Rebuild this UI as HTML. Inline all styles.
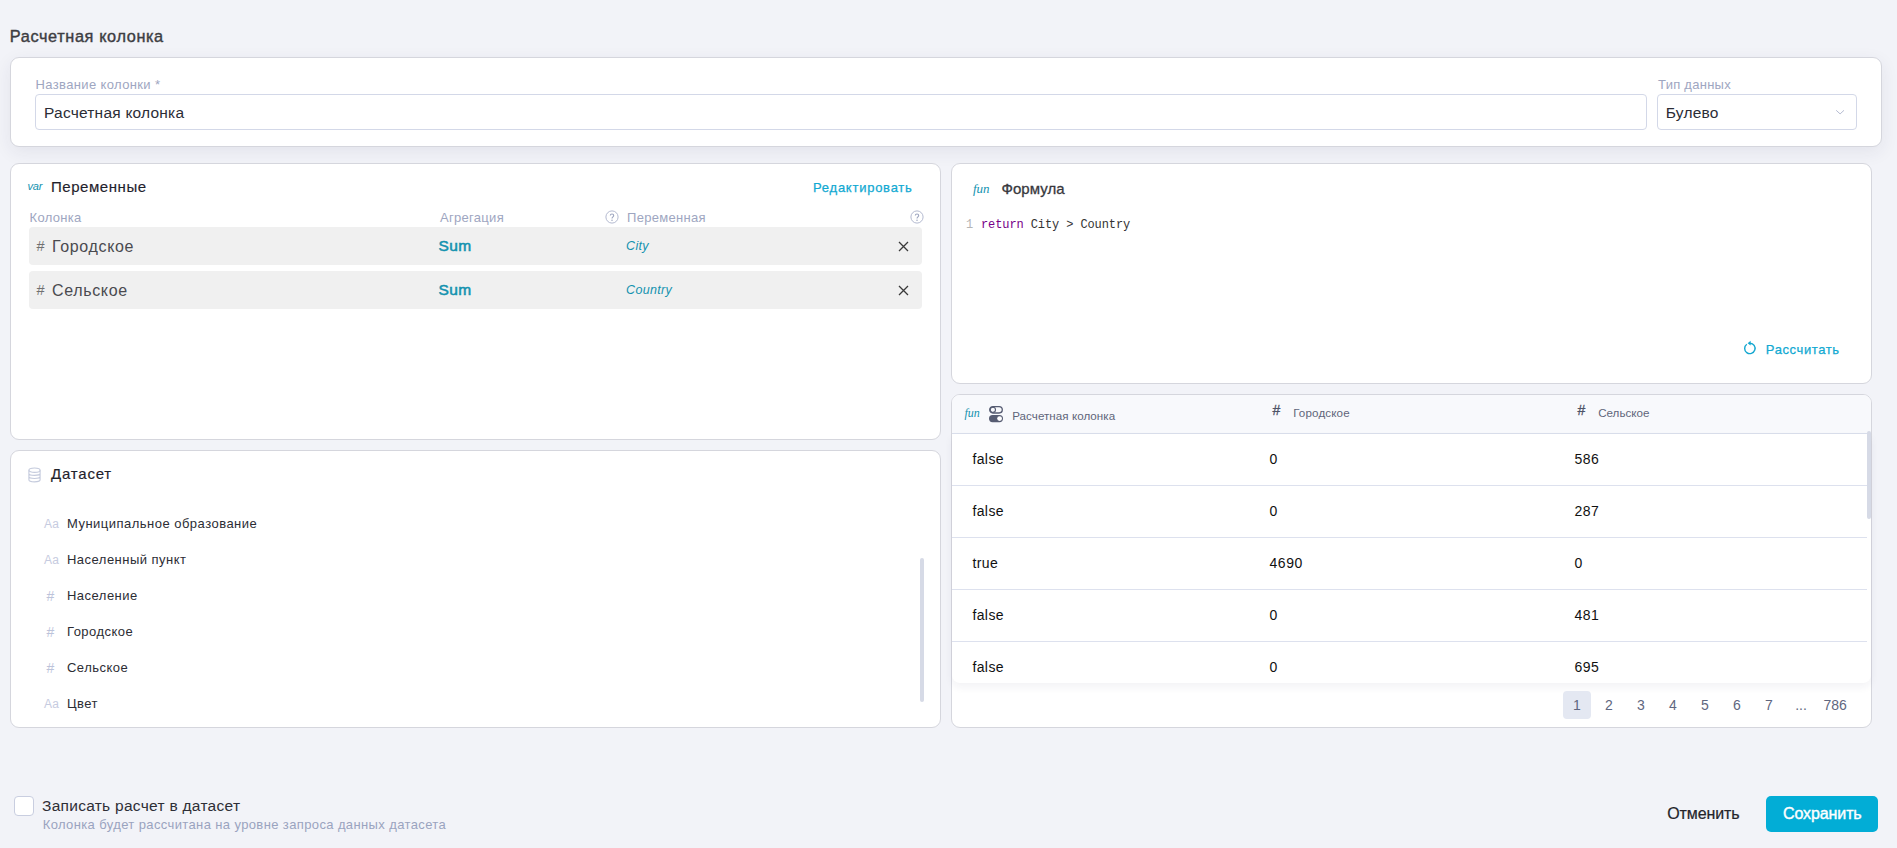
<!DOCTYPE html>
<html><head><meta charset="utf-8"><style>
html,body{margin:0;padding:0;}
body{width:1897px;height:848px;overflow:hidden;position:relative;background:#f2f3f8;font-family:'Liberation Sans', sans-serif;}
.a{position:absolute;}
.t{position:absolute;white-space:nowrap;line-height:1;}
</style></head><body>
<div class="t" id="title" style="left:9.8px;top:28.00px;font-size:16.3px;color:#3d3d42;font-weight:400;letter-spacing:0.62px;font-family:'Liberation Sans', sans-serif;-webkit-text-stroke:0.4px currentColor;">Расчетная колонка</div>
<div class="a" style="left:10px;top:57px;width:1872px;height:90px;background:#fff;border:1px solid #d5d6dd;border-radius:9px;box-sizing:border-box;box-shadow:0 5px 18px rgba(40,45,80,0.075);"></div>
<div class="t" id="lbl1" style="left:35.5px;top:78.00px;font-size:13px;color:#9ea6c1;font-weight:400;letter-spacing:0.37px;font-family:'Liberation Sans', sans-serif;">Название колонки *</div>
<div class="a" style="left:35px;top:94px;width:1612px;height:36px;background:#fff;border:1px solid #d3d8e8;border-radius:4px;box-sizing:border-box;"></div>
<div class="t" id="inp1" style="left:44px;top:105.08px;font-size:15.5px;color:#2b2d36;font-weight:400;letter-spacing:0.22px;font-family:'Liberation Sans', sans-serif;">Расчетная колонка</div>
<div class="t" id="lbl2" style="left:1658px;top:78.00px;font-size:13px;color:#9ea6c1;font-weight:400;letter-spacing:0.27px;font-family:'Liberation Sans', sans-serif;">Тип данных</div>
<div class="a" style="left:1657px;top:94px;width:200px;height:36px;background:#fff;border:1px solid #d3d8e8;border-radius:4px;box-sizing:border-box;"></div>
<div class="t" id="sel" style="left:1665.8px;top:104.68px;font-size:15.5px;color:#2b2d36;font-weight:400;letter-spacing:0.2px;font-family:'Liberation Sans', sans-serif;">Булево</div>
<svg class="a" style="left:1835px;top:108px" width="12" height="8" viewBox="0 0 12 8"><path d="M1.2 2.3 L5.1 5.9 L9 2.3" fill="none" stroke="#b6bcd2" stroke-width="1"/></svg>
<div class="a" style="left:10px;top:163px;width:931px;height:277px;background:#fff;border:1px solid #d5d6dd;border-radius:9px;box-sizing:border-box;"></div>
<div class="t" id="var" style="left:27.5px;top:180.69px;font-size:11px;color:#1392af;font-weight:400;letter-spacing:-0.2px;font-family:'Liberation Sans', sans-serif;font-style:italic;">var</div>
<div class="t" id="perem" style="left:51px;top:178.90px;font-size:15px;color:#1f222c;font-weight:400;letter-spacing:0.55px;font-family:'Liberation Sans', sans-serif;-webkit-text-stroke:0.15px currentColor;">Переменные</div>
<div class="t" id="edit" style="left:813px;top:180.60px;font-size:13px;color:#11a9d2;font-weight:400;letter-spacing:0.75px;font-family:'Liberation Sans', sans-serif;-webkit-text-stroke:0.25px currentColor;">Редактировать</div>
<div class="t" style="left:29.6px;top:211.00px;font-size:13px;color:#9ea6c1;font-weight:400;letter-spacing:0.3px;font-family:'Liberation Sans', sans-serif;">Колонка</div>
<div class="t" style="left:440px;top:211.00px;font-size:13px;color:#9ea6c1;font-weight:400;letter-spacing:0.3px;font-family:'Liberation Sans', sans-serif;">Агрегация</div>
<div class="t" style="left:627px;top:211.00px;font-size:13px;color:#9ea6c1;font-weight:400;letter-spacing:0.3px;font-family:'Liberation Sans', sans-serif;">Переменная</div>
<svg class="a" style="left:605.3px;top:210.4px" width="14" height="14" viewBox="0 0 14 14"><circle cx="7" cy="7" r="6.1" fill="none" stroke="#b4bad0" stroke-width="1"/><path d="M5.3 5.5 C5.3 3.4 8.7 3.4 8.7 5.5 C8.7 6.9 7 6.9 7 8.6" fill="none" stroke="#9ea6c0" stroke-width="1.1"/><circle cx="7" cy="10.3" r="0.75" fill="#9ea6c0"/></svg>
<svg class="a" style="left:910.2px;top:210.4px" width="14" height="14" viewBox="0 0 14 14"><circle cx="7" cy="7" r="6.1" fill="none" stroke="#b4bad0" stroke-width="1"/><path d="M5.3 5.5 C5.3 3.4 8.7 3.4 8.7 5.5 C8.7 6.9 7 6.9 7 8.6" fill="none" stroke="#9ea6c0" stroke-width="1.1"/><circle cx="7" cy="10.3" r="0.75" fill="#9ea6c0"/></svg>
<div class="a" style="left:29px;top:227px;width:893px;height:38px;background:#f0f0f0;border-radius:4px;"></div>
<div class="t" style="left:36.5px;top:239.03px;font-size:14.5px;color:#707070;font-weight:400;letter-spacing:0px;font-family:'Liberation Sans', sans-serif;">#</div>
<div class="t" id="rn0" style="left:52px;top:239.46px;font-size:16px;color:#4a4a4f;font-weight:400;letter-spacing:0.65px;font-family:'Liberation Sans', sans-serif;">Городское</div>
<div class="t" id="sum0" style="left:438.5px;top:238.48px;font-size:15.5px;color:#1392af;font-weight:400;letter-spacing:0.35px;font-family:'Liberation Sans', sans-serif;-webkit-text-stroke:0.55px currentColor;">Sum</div>
<div class="t" id="var0" style="left:626px;top:239.62px;font-size:12.5px;color:#1392af;font-weight:400;letter-spacing:0.35px;font-family:'Liberation Sans', sans-serif;font-style:italic;">City</div>
<svg class="a" style="left:898px;top:240.5px" width="11" height="11" viewBox="0 0 11 11"><path d="M1 1 L10 10 M10 1 L1 10" stroke="#3a3a3a" stroke-width="1.3"/></svg>
<div class="a" style="left:29px;top:271px;width:893px;height:38px;background:#f0f0f0;border-radius:4px;"></div>
<div class="t" style="left:36.5px;top:283.03px;font-size:14.5px;color:#707070;font-weight:400;letter-spacing:0px;font-family:'Liberation Sans', sans-serif;">#</div>
<div class="t" id="rn1" style="left:52px;top:283.46px;font-size:16px;color:#4a4a4f;font-weight:400;letter-spacing:0.65px;font-family:'Liberation Sans', sans-serif;">Сельское</div>
<div class="t" id="sum1" style="left:438.5px;top:282.48px;font-size:15.5px;color:#1392af;font-weight:400;letter-spacing:0.35px;font-family:'Liberation Sans', sans-serif;-webkit-text-stroke:0.55px currentColor;">Sum</div>
<div class="t" id="var1" style="left:626px;top:283.62px;font-size:12.5px;color:#1392af;font-weight:400;letter-spacing:0.35px;font-family:'Liberation Sans', sans-serif;font-style:italic;">Country</div>
<svg class="a" style="left:898px;top:284.5px" width="11" height="11" viewBox="0 0 11 11"><path d="M1 1 L10 10 M10 1 L1 10" stroke="#3a3a3a" stroke-width="1.3"/></svg>
<div class="a" style="left:951px;top:163px;width:921px;height:221px;background:#fff;border:1px solid #d5d6dd;border-radius:9px;box-sizing:border-box;"></div>
<div class="t" id="fun1" style="left:973px;top:182.40px;font-size:13px;color:#1392af;font-weight:400;letter-spacing:0px;font-family:'Liberation Serif', serif;font-style:italic;">fun</div>
<div class="t" id="formula" style="left:1001.5px;top:181.20px;font-size:15px;color:#38383d;font-weight:400;letter-spacing:0.05px;font-family:'Liberation Sans', sans-serif;-webkit-text-stroke:0.3px currentColor;">Формула</div>
<div class="t" style="left:966px;top:218.84px;font-size:12px;color:#b5b5b5;font-weight:400;letter-spacing:0px;font-family:'Liberation Mono', monospace;">1</div>
<div class="t" id="code" style="left:981px;top:218.84px;font-size:12px;color:#333;font-weight:400;letter-spacing:-0.1px;font-family:'Liberation Mono', monospace;"><span style="color:#770088">return</span> City &gt; Country</div>
<svg class="a" style="left:1742px;top:340px" width="16" height="16" viewBox="0 0 16 16"><path d="M4.8 4.2 A5.2 5.2 0 1 0 8 3.2" fill="none" stroke="#14a7d0" stroke-width="1.4"/><path d="M8.6 0.8 L8.6 5.4 L5.6 3.2 Z" fill="#14a7d0"/></svg>
<div class="t" id="calc" style="left:1765.8px;top:343.20px;font-size:13px;color:#11a9d2;font-weight:400;letter-spacing:0.6px;font-family:'Liberation Sans', sans-serif;-webkit-text-stroke:0.25px currentColor;">Рассчитать</div>
<div class="a" style="left:951px;top:394px;width:921px;height:334px;background:#fff;border:1px solid #d5d6dd;border-radius:9px;box-sizing:border-box;overflow:hidden;"></div>
<div class="a" style="left:952px;top:395px;width:919px;height:38px;background:#f8f9fc;border-radius:8px 8px 0 0;"></div>
<div class="a" style="left:952px;top:433px;width:915px;height:1px;background:#dadfec;"></div>
<div class="t" id="fun2" style="left:964.5px;top:406.84px;font-size:12px;color:#1392af;font-weight:400;letter-spacing:0px;font-family:'Liberation Serif', serif;font-style:italic;">fun</div>
<svg class="a" style="left:988px;top:405px" width="16" height="18" viewBox="0 0 16 18"><rect x="1.7" y="1.6" width="12.6" height="6.4" rx="3.2" fill="none" stroke="#565c72" stroke-width="1.3"/><circle cx="4.9" cy="4.8" r="2.6" fill="none" stroke="#565c72" stroke-width="1.1"/><rect x="1" y="10" width="14" height="7.2" rx="3.6" fill="#565c72"/><circle cx="11.6" cy="13.6" r="2.4" fill="#fff"/></svg>
<div class="t" id="th1" style="left:1012.2px;top:409.78px;font-size:11.6px;color:#60657a;font-weight:400;letter-spacing:0.05px;font-family:'Liberation Sans', sans-serif;">Расчетная колонка</div>
<div class="t" style="left:1272.6px;top:402.75px;font-size:14px;color:#4f5468;font-weight:400;letter-spacing:0px;font-family:'Liberation Sans', sans-serif;-webkit-text-stroke:0.3px currentColor;">#</div>
<div class="t" id="th2" style="left:1293.2px;top:406.58px;font-size:11.6px;color:#60657a;font-weight:400;letter-spacing:0.15px;font-family:'Liberation Sans', sans-serif;">Городское</div>
<div class="t" style="left:1577.6px;top:402.75px;font-size:14px;color:#4f5468;font-weight:400;letter-spacing:0px;font-family:'Liberation Sans', sans-serif;-webkit-text-stroke:0.3px currentColor;">#</div>
<div class="t" id="th3" style="left:1598.2px;top:406.78px;font-size:11.6px;color:#60657a;font-weight:400;letter-spacing:0.0px;font-family:'Liberation Sans', sans-serif;">Сельское</div>
<div class="a" style="left:952px;top:434px;width:919px;height:249px;background:#fff;border-radius:0 0 8px 8px;box-shadow:0 4px 8px rgba(30,40,80,0.06);"></div>
<div class="t" style="left:972.4px;top:452.15px;font-size:14px;color:#111;font-weight:400;letter-spacing:0.4px;font-family:'Liberation Sans', sans-serif;">false</div>
<div class="t" style="left:1269.5px;top:452.15px;font-size:14px;color:#111;font-weight:400;letter-spacing:0.55px;font-family:'Liberation Sans', sans-serif;">0</div>
<div class="t" style="left:1574.4px;top:452.15px;font-size:14px;color:#111;font-weight:400;letter-spacing:0.55px;font-family:'Liberation Sans', sans-serif;">586</div>
<div class="a" style="left:952px;top:485px;width:915px;height:1px;background:#dde1ee;"></div>
<div class="t" style="left:972.4px;top:504.15px;font-size:14px;color:#111;font-weight:400;letter-spacing:0.4px;font-family:'Liberation Sans', sans-serif;">false</div>
<div class="t" style="left:1269.5px;top:504.15px;font-size:14px;color:#111;font-weight:400;letter-spacing:0.55px;font-family:'Liberation Sans', sans-serif;">0</div>
<div class="t" style="left:1574.4px;top:504.15px;font-size:14px;color:#111;font-weight:400;letter-spacing:0.55px;font-family:'Liberation Sans', sans-serif;">287</div>
<div class="a" style="left:952px;top:537px;width:915px;height:1px;background:#dde1ee;"></div>
<div class="t" style="left:972.4px;top:556.15px;font-size:14px;color:#111;font-weight:400;letter-spacing:0.4px;font-family:'Liberation Sans', sans-serif;">true</div>
<div class="t" style="left:1269.5px;top:556.15px;font-size:14px;color:#111;font-weight:400;letter-spacing:0.55px;font-family:'Liberation Sans', sans-serif;">4690</div>
<div class="t" style="left:1574.4px;top:556.15px;font-size:14px;color:#111;font-weight:400;letter-spacing:0.55px;font-family:'Liberation Sans', sans-serif;">0</div>
<div class="a" style="left:952px;top:589px;width:915px;height:1px;background:#dde1ee;"></div>
<div class="t" style="left:972.4px;top:608.15px;font-size:14px;color:#111;font-weight:400;letter-spacing:0.4px;font-family:'Liberation Sans', sans-serif;">false</div>
<div class="t" style="left:1269.5px;top:608.15px;font-size:14px;color:#111;font-weight:400;letter-spacing:0.55px;font-family:'Liberation Sans', sans-serif;">0</div>
<div class="t" style="left:1574.4px;top:608.15px;font-size:14px;color:#111;font-weight:400;letter-spacing:0.55px;font-family:'Liberation Sans', sans-serif;">481</div>
<div class="a" style="left:952px;top:641px;width:915px;height:1px;background:#dde1ee;"></div>
<div class="t" style="left:972.4px;top:660.15px;font-size:14px;color:#111;font-weight:400;letter-spacing:0.4px;font-family:'Liberation Sans', sans-serif;">false</div>
<div class="t" style="left:1269.5px;top:660.15px;font-size:14px;color:#111;font-weight:400;letter-spacing:0.55px;font-family:'Liberation Sans', sans-serif;">0</div>
<div class="t" style="left:1574.4px;top:660.15px;font-size:14px;color:#111;font-weight:400;letter-spacing:0.55px;font-family:'Liberation Sans', sans-serif;">695</div>
<div class="a" style="left:1867px;top:431px;width:4px;height:88px;background:#d6dae6;border-radius:2px;"></div>
<div class="a" style="left:1563px;top:691px;width:28px;height:28px;background:#e4e8f2;border-radius:4px;"></div>
<div class="t" style="left:1557px;width:40px;text-align:center;top:698.15px;font-size:14px;color:#5f6780;font-family:'Liberation Sans', sans-serif;">1</div>
<div class="t" style="left:1589px;width:40px;text-align:center;top:698.15px;font-size:14px;color:#5f6780;font-family:'Liberation Sans', sans-serif;">2</div>
<div class="t" style="left:1621px;width:40px;text-align:center;top:698.15px;font-size:14px;color:#5f6780;font-family:'Liberation Sans', sans-serif;">3</div>
<div class="t" style="left:1653px;width:40px;text-align:center;top:698.15px;font-size:14px;color:#5f6780;font-family:'Liberation Sans', sans-serif;">4</div>
<div class="t" style="left:1685px;width:40px;text-align:center;top:698.15px;font-size:14px;color:#5f6780;font-family:'Liberation Sans', sans-serif;">5</div>
<div class="t" style="left:1717px;width:40px;text-align:center;top:698.15px;font-size:14px;color:#5f6780;font-family:'Liberation Sans', sans-serif;">6</div>
<div class="t" style="left:1749px;width:40px;text-align:center;top:698.15px;font-size:14px;color:#5f6780;font-family:'Liberation Sans', sans-serif;">7</div>
<div class="t" style="left:1781px;width:40px;text-align:center;top:698.15px;font-size:14px;color:#5f6780;font-family:'Liberation Sans', sans-serif;">...</div>
<div class="t" style="left:1815.2px;width:40px;text-align:center;top:698.15px;font-size:14px;color:#5f6780;font-family:'Liberation Sans', sans-serif;">786</div>
<div class="a" style="left:10px;top:450px;width:931px;height:278px;background:#fff;border:1px solid #d5d6dd;border-radius:9px;box-sizing:border-box;"></div>
<svg class="a" style="left:27px;top:467px" width="15" height="16" viewBox="0 0 15 16"><ellipse cx="7.5" cy="3.2" rx="5.6" ry="2.2" fill="none" stroke="#c5cbdd" stroke-width="1.1"/><path d="M1.9 3.2 V12.8 C1.9 15.5 13.1 15.5 13.1 12.8 V3.2 M1.9 6.4 C1.9 9 13.1 9 13.1 6.4 M1.9 9.6 C1.9 12.2 13.1 12.2 13.1 9.6" fill="none" stroke="#c5cbdd" stroke-width="1.1"/></svg>
<div class="t" id="ds" style="left:51px;top:465.90px;font-size:15px;color:#1f222c;font-weight:400;letter-spacing:0.8px;font-family:'Liberation Sans', sans-serif;-webkit-text-stroke:0.15px currentColor;">Датасет</div>
<div class="t" style="left:44px;top:518.24px;font-size:12px;color:#c6cbe0;font-weight:400;letter-spacing:0.2px;font-family:'Liberation Sans', sans-serif;">Aa</div>
<div class="t" id="it0" style="left:67px;top:517.40px;font-size:13px;color:#2c2d34;font-weight:400;letter-spacing:0.48px;font-family:'Liberation Sans', sans-serif;">Муниципальное образование</div>
<div class="t" style="left:44px;top:554.24px;font-size:12px;color:#c6cbe0;font-weight:400;letter-spacing:0.2px;font-family:'Liberation Sans', sans-serif;">Aa</div>
<div class="t" id="it1" style="left:67px;top:553.40px;font-size:13px;color:#2c2d34;font-weight:400;letter-spacing:0.48px;font-family:'Liberation Sans', sans-serif;">Населенный пункт</div>
<div class="t" style="left:46.5px;top:588.85px;font-size:14px;color:#bcc3da;font-weight:400;letter-spacing:0px;font-family:'Liberation Sans', sans-serif;">#</div>
<div class="t" id="it2" style="left:67px;top:589.40px;font-size:13px;color:#2c2d34;font-weight:400;letter-spacing:0.48px;font-family:'Liberation Sans', sans-serif;">Население</div>
<div class="t" style="left:46.5px;top:624.85px;font-size:14px;color:#bcc3da;font-weight:400;letter-spacing:0px;font-family:'Liberation Sans', sans-serif;">#</div>
<div class="t" id="it3" style="left:67px;top:625.40px;font-size:13px;color:#2c2d34;font-weight:400;letter-spacing:0.48px;font-family:'Liberation Sans', sans-serif;">Городское</div>
<div class="t" style="left:46.5px;top:660.85px;font-size:14px;color:#bcc3da;font-weight:400;letter-spacing:0px;font-family:'Liberation Sans', sans-serif;">#</div>
<div class="t" id="it4" style="left:67px;top:661.40px;font-size:13px;color:#2c2d34;font-weight:400;letter-spacing:0.48px;font-family:'Liberation Sans', sans-serif;">Сельское</div>
<div class="t" style="left:44px;top:698.24px;font-size:12px;color:#c6cbe0;font-weight:400;letter-spacing:0.2px;font-family:'Liberation Sans', sans-serif;">Aa</div>
<div class="t" id="it5" style="left:67px;top:697.40px;font-size:13px;color:#2c2d34;font-weight:400;letter-spacing:0.48px;font-family:'Liberation Sans', sans-serif;">Цвет</div>
<div class="a" style="left:920px;top:558px;width:4px;height:144px;background:#d6dae6;border-radius:2px;"></div>
<div class="a" style="left:14px;top:796px;width:20px;height:20px;background:#fff;border:1px solid #c9cee0;border-radius:4px;box-sizing:border-box;"></div>
<div class="t" id="chk" style="left:42px;top:798.38px;font-size:15.5px;color:#2e2e36;font-weight:400;letter-spacing:0.28px;font-family:'Liberation Sans', sans-serif;">Записать расчет в датасет</div>
<div class="t" id="chk2" style="left:42.7px;top:818.00px;font-size:13px;color:#9aa3bf;font-weight:400;letter-spacing:0.38px;font-family:'Liberation Sans', sans-serif;">Колонка будет рассчитана на уровне запроса данных датасета</div>
<div class="t" id="cancel" style="left:1667.3px;top:805.96px;font-size:16px;color:#24242a;font-weight:400;letter-spacing:-0.12px;font-family:'Liberation Sans', sans-serif;-webkit-text-stroke:0.22px currentColor;">Отменить</div>
<div class="a" style="left:1766px;top:796px;width:112px;height:36px;background:#02add6;border-radius:5px;"></div>
<div class="t" id="save" style="left:1783px;top:805.96px;font-size:16px;color:#fff;font-weight:400;letter-spacing:-0.1px;font-family:'Liberation Sans', sans-serif;-webkit-text-stroke:0.4px currentColor;">Сохранить</div>
</body></html>
